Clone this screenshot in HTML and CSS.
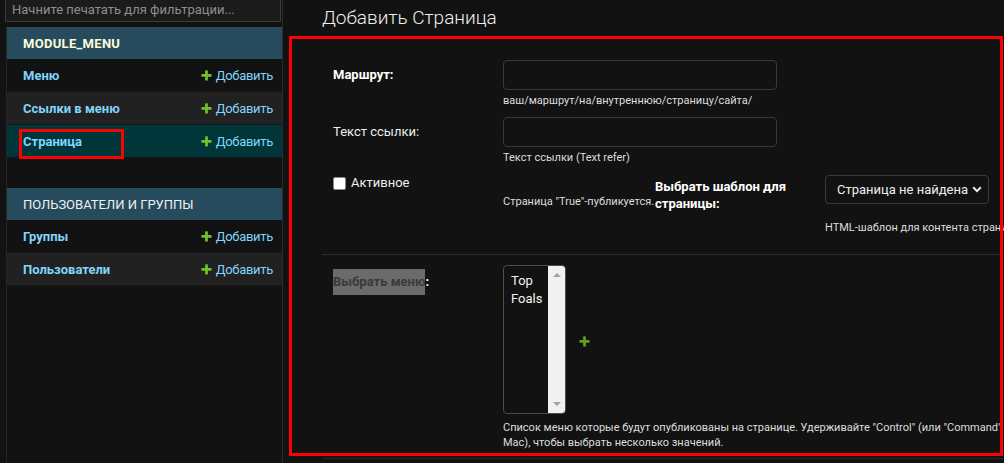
FILE: index.html
```html
<!DOCTYPE html>
<html lang="ru">
<head>
<meta charset="utf-8">
<title>Добавить Страница</title>
<link rel="stylesheet" href="styles.css">
</head>
<body>
<div class="layout">
  <nav class="sidebar">
    <input class="nav-filter" type="text" placeholder="Начните печатать для фильтрации...">
    <div class="nav-modules">
      <div class="module">
        <div class="caption caption-app">MODULE_MENU</div>
        <div class="model-row">
          <a class="model-link">Меню</a>
          <a class="addlink"><svg class="plus" viewBox="0 0 1792 1792"><path d="M1600 796v192q0 40-28 68t-68 28h-416v416q0 40-28 68t-68 28h-192q-40 0-68-28t-28-68v-416h-416q-40 0-68-28t-28-68v-192q0-40 28-68t68-28h416v-416q0-40 28-68t68-28h192q40 0 68 28t28 68v416h416q40 0 68 28t28 68z"/></svg>Добавить</a>
        </div>
        <div class="model-row alt">
          <a class="model-link">Ссылки в меню</a>
          <a class="addlink"><svg class="plus" viewBox="0 0 1792 1792"><path d="M1600 796v192q0 40-28 68t-68 28h-416v416q0 40-28 68t-68 28h-192q-40 0-68-28t-28-68v-416h-416q-40 0-68-28t-28-68v-192q0-40 28-68t68-28h416v-416q0-40 28-68t68-28h192q40 0 68 28t28 68v416h416q40 0 68 28t28 68z"/></svg>Добавить</a>
        </div>
        <div class="model-row current">
          <a class="model-link">Страница</a>
          <a class="addlink"><svg class="plus" viewBox="0 0 1792 1792"><path d="M1600 796v192q0 40-28 68t-68 28h-416v416q0 40-28 68t-68 28h-192q-40 0-68-28t-28-68v-416h-416q-40 0-68-28t-28-68v-192q0-40 28-68t68-28h416v-416q0-40 28-68t68-28h192q40 0 68 28t28 68v416h416q40 0 68 28t28 68z"/></svg>Добавить</a>
        </div>
      </div>
      <div class="module">
        <div class="caption">ПОЛЬЗОВАТЕЛИ И ГРУППЫ</div>
        <div class="model-row">
          <a class="model-link">Группы</a>
          <a class="addlink"><svg class="plus" viewBox="0 0 1792 1792"><path d="M1600 796v192q0 40-28 68t-68 28h-416v416q0 40-28 68t-68 28h-192q-40 0-68-28t-28-68v-416h-416q-40 0-68-28t-28-68v-192q0-40 28-68t68-28h416v-416q0-40 28-68t68-28h192q40 0 68 28t28 68v416h416q40 0 68 28t28 68z"/></svg>Добавить</a>
        </div>
        <div class="model-row alt">
          <a class="model-link">Пользователи</a>
          <a class="addlink"><svg class="plus" viewBox="0 0 1792 1792"><path d="M1600 796v192q0 40-28 68t-68 28h-416v416q0 40-28 68t-68 28h-192q-40 0-68-28t-28-68v-416h-416q-40 0-68-28t-28-68v-192q0-40 28-68t68-28h416v-416q0-40 28-68t68-28h192q40 0 68 28t28 68v416h416q40 0 68 28t28 68z"/></svg>Добавить</a>
        </div>
      </div>
    </div>
  </nav>

  <main class="content">
    <h1 class="title">Добавить Страница</h1>
    <form class="form">
      <div class="form-row row-main">
        <div class="field">
          <label class="label required">Маршрут:</label>
          <div class="control">
            <input class="text-input" type="text">
            <div class="help">ваш/маршрут/на/внутреннюю/страницу/сайта/</div>
          </div>
        </div>
        <div class="field">
          <label class="label">Текст ссылки:</label>
          <div class="control">
            <input class="text-input" type="text">
            <div class="help">Текст ссылки (Text refer)</div>
          </div>
        </div>
        <div class="field field-split">
          <div class="box-check">
            <div class="check-line"><span class="checkbox"></span><span class="check-label">Активное</span></div>
            <div class="help help-nowrap help-indent">Страница "True"-публикуется.</div>
          </div>
          <div class="box-template">
            <div class="template-line">
              <label class="label label-template required">Выбрать шаблон для страницы:</label>
              <div class="select">
                <span class="select-value">Страница не найдена</span>
                <svg class="chevron" viewBox="0 0 10 7"><path d="M1.2 1.3 5 5.1 8.8 1.3"/></svg>
              </div>
            </div>
            <div class="help help-nowrap">HTML-шаблон для контента страницы.</div>
          </div>
        </div>
      </div>

      <div class="form-row row-menus">
        <div class="field">
          <label class="label required label-menus"><span class="selected-text">Выбрать меню</span>:</label>
          <div class="control">
            <div class="multi-line">
              <div class="multi">
                <div class="options">
                  <div class="option">Top</div>
                  <div class="option">Foals</div>
                </div>
                <div class="scrollbar">
                  <span class="arrow arrow-up"></span>
                  <span class="arrow arrow-down"></span>
                </div>
              </div>
              <svg class="plus plus-form" viewBox="0 0 1792 1792"><path d="M1600 796v192q0 40-28 68t-68 28h-416v416q0 40-28 68t-68 28h-192q-40 0-68-28t-28-68v-416h-416q-40 0-68-28t-28-68v-192q0-40 28-68t68-28h416v-416q0-40 28-68t68-28h192q40 0 68 28t28 68v416h416q40 0 68 28t28 68z"/></svg>
            </div>
            <div class="help help-nowrap help-menus">Список меню которые будут опубликованы на странице. Удерживайте "Control" (или "Command" на<br>Mac), чтобы выбрать несколько значений.</div>
          </div>
        </div>
      </div>
    </form>
  </main>
</div>

<div class="mark mark-current"></div>
<div class="mark mark-form"></div>
</body>
</html>
```

FILE: styles.css
```css
* { box-sizing: border-box; }

html, body {
  margin: 0;
  height: 100%;
}

body {
  position: relative;
  background: #121212;
  color: #eeeeee;
  font-family: Roboto, "Noto Sans", sans-serif;
  font-size: 13px;
  overflow: hidden;
}

.layout {
  display: flex;
  height: 100vh;
}

/* ---------- sidebar ---------- */
.sidebar {
  width: 283px;
  flex: none;
  display: flex;
  flex-direction: column;
  padding-left: 6px;
  border-right: 1px solid #2c2c2c;
}

.nav-filter {
  display: block;
  width: 100%;
  height: 26px;
  margin: -4px 0 5px -1px;
  padding: 0 6px;
  background: #1b1b1b;
  border: 1px solid #3a3a3a;
  color: #eee;
  font: 13px Roboto, "Noto Sans", sans-serif;
  outline: none;
}
.nav-filter::placeholder { color: #8e8e8e; }

.nav-modules {
  flex: 1;
  border-left: 1px solid #262626;
}

.module { margin-bottom: 30px; }

.caption {
  height: 32px;
  display: flex;
  align-items: center;
  padding: 0 16px;
  background: #264b5d;
  color: #f0f0f0;
  font-size: 13px;
}
.caption-app {
  font-weight: 700;
  color: #fffbd6;
  letter-spacing: 0.3px;
}

.model-row {
  height: 33px;
  display: flex;
  align-items: center;
  justify-content: space-between;
  padding: 0 9px 0 16px;
  border-bottom: 1px solid #161616;
}
.model-row.alt { background: #212121; }
.model-row.current { background: #00363a; }

.model-link {
  color: #81d4fa;
  font-weight: 700;
}

.addlink {
  display: flex;
  align-items: center;
  gap: 3px;
  color: #81d4fa;
  letter-spacing: -0.3px;
}

.plus {
  width: 13px;
  height: 13px;
  fill: #70bf2b;
  flex: none;
}

/* ---------- content ---------- */
.content {
  flex: 1;
  min-width: 0;
  padding-left: 39px;
  overflow: hidden;
}

.title {
  margin: 0;
  padding-top: 6px;
  font-size: 19px;
  line-height: 24px;
  font-weight: 300;
  color: #f0f0f0;
}

.form { margin-top: 20px; }

.form-row {
  padding: 10px 0 10px 11px;
  border-bottom: 1px solid #2a2a2a;
}
.row-main { padding-bottom: 19px; }
.row-menus { padding-bottom: 8px; }

.field { display: flex; }
.field + .field { margin-top: 9px; }
.field-split { margin-top: 7px !important; }

.label {
  width: 170px;
  flex: none;
  line-height: 30px;
  color: #eeeeee;
}
.label.required { font-weight: 700; color: #ffffff; }

.control { display: flex; flex-direction: column; }

.text-input {
  width: 274px;
  height: 30px;
  background: #121212;
  border: 1px solid #383838;
  border-radius: 4px;
  outline: none;
}

.help {
  margin-top: 3px;
  font-size: 11px;
  line-height: 15px;
  color: #dddddd;
}
.help-nowrap { white-space: nowrap; }

/* checkbox + template */
.box-check { width: 322px; flex: none; }
.check-line {
  display: flex;
  align-items: center;
  height: 20px;
}
.checkbox {
  width: 13px;
  height: 13px;
  margin-top: 3px;
  background: #ffffff;
  border: 1px solid #8a8a8a;
  border-radius: 2px;
}
.check-label { margin-left: 5px; }
.help-indent { margin: 2px 0 0 170px; }

.box-template {
  display: flex;
  flex-direction: column;
  margin-top: 3px;
}
.template-line { display: flex; align-items: flex-start; }
.label-template {
  width: 160px;
  margin-right: 10px;
  padding-top: 3px;
  line-height: 17px;
}
.select {
  width: 164px;
  height: 29px;
  flex: none;
  display: flex;
  align-items: center;
  justify-content: space-between;
  padding: 0 6px 0 11px;
  border: 1px solid #3a3a3a;
  border-radius: 4px;
  font-size: 13px;
  color: #eeeeee;
}
.select-value { white-space: nowrap; }
.chevron {
  width: 10px;
  height: 7px;
  flex: none;
  fill: none;
  stroke: #eeeeee;
  stroke-width: 2;
}
.box-template .help { margin: 8px 0 0 170px; }

/* menus */
.label-menus {
  line-height: 16px;
  margin-top: 4px;
  align-self: flex-start;
}
.selected-text {
  display: inline-block;
  padding: 5px 0;
  background: #6b6b6b;
  color: #3a3a3a;
}

.multi-line {
  display: flex;
  align-items: center;
}
.multi {
  width: 63px;
  height: 149px;
  display: flex;
  border: 1px solid #4d4d4d;
  border-radius: 4px;
  overflow: hidden;
}
.options {
  flex: 1;
  padding: 6px 0 0 7px;
  line-height: 18px;
  font-size: 13px;
  color: #f2f2f2;
}
.scrollbar {
  width: 17px;
  flex: none;
  background: #f1f1f1;
  display: flex;
  flex-direction: column;
  justify-content: space-between;
  align-items: center;
  padding: 7px 0;
}
.arrow {
  width: 0;
  height: 0;
  border-left: 4px solid transparent;
  border-right: 4px solid transparent;
}
.arrow-up { border-bottom: 4px solid #a3a3a3; }
.arrow-down { border-top: 4px solid #a3a3a3; }

.plus-form {
  margin: 3px 0 0 12px;
  fill: #5f9f25;
}

.help-menus { margin-top: 6px; }

/* ---------- annotation boxes ---------- */
.mark {
  position: absolute;
  border: 3px solid #ff0000;
  pointer-events: none;
}
.mark-current { left: 19px; top: 129px; width: 105px; height: 30px; }
.mark-form { left: 289px; top: 36px; width: 714px; height: 420px; }
```
